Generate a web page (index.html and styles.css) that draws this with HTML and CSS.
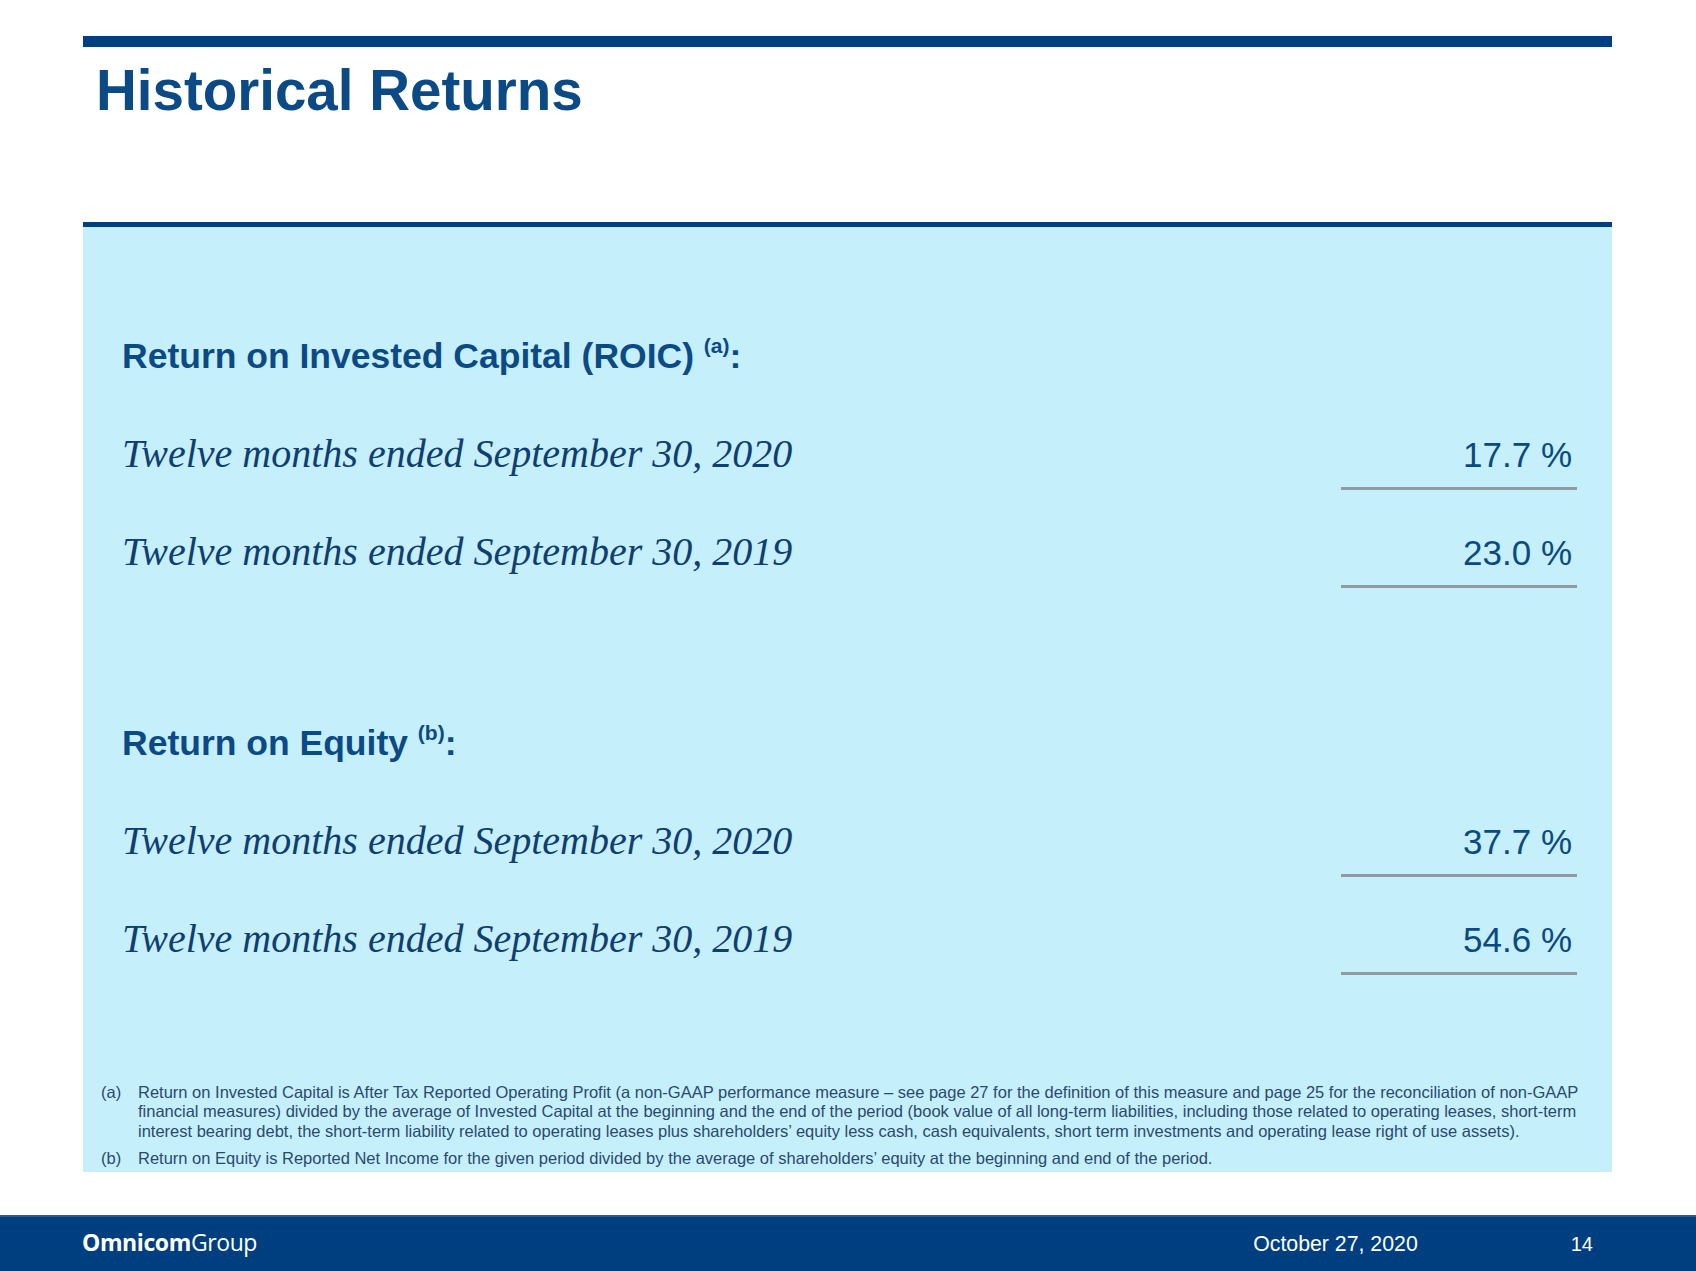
FILE: index.html
```html
<!DOCTYPE html>
<html lang="en">
<head>
<meta charset="utf-8">
<title>Historical Returns</title>
<link rel="stylesheet" href="styles.css">
</head>
<body>
<div class="slide">
  <header class="header">
    <div class="topbar"></div>
    <h1 class="title">Historical Returns</h1>
    <div class="divider"></div>
  </header>

  <main class="panel">
    <section class="block">
      <h2 class="block-title">Return on Invested Capital (ROIC) <sup>(a)</sup>:</h2>
      <div class="row">
        <span class="label">Twelve months ended September 30, 2020</span>
        <span class="value">17.7 %</span>
      </div>
      <div class="row">
        <span class="label">Twelve months ended September 30, 2019</span>
        <span class="value">23.0 %</span>
      </div>
    </section>

    <section class="block block-second">
      <h2 class="block-title">Return on Equity <sup>(b)</sup>:</h2>
      <div class="row">
        <span class="label">Twelve months ended September 30, 2020</span>
        <span class="value">37.7 %</span>
      </div>
      <div class="row">
        <span class="label">Twelve months ended September 30, 2019</span>
        <span class="value">54.6 %</span>
      </div>
    </section>

    <div class="notes">
      <div class="note">
        <span class="note-label">(a)</span>
        <p class="note-text">Return on Invested Capital is After Tax Reported Operating Profit (a non-GAAP performance measure – see page 27 for the definition of this measure and page 25 for the reconciliation of non-GAAP<br>financial measures) divided by the average of Invested Capital at the beginning and the end of the period (book value of all long-term liabilities, including those related to operating leases, short-term<br>interest bearing debt, the short-term liability related to operating leases plus shareholders’ equity less cash, cash equivalents, short term investments and operating lease right of use assets).</p>
      </div>
      <div class="note note-b">
        <span class="note-label">(b)</span>
        <p class="note-text">Return on Equity is Reported Net Income for the given period divided by the average of shareholders’ equity at the beginning and end of the period.</p>
      </div>
    </div>
  </main>

  <footer class="footer">
    <span class="logo"><span class="logo-bold">Omnicom</span>Group</span>
    <span class="date">October 27, 2020</span>
    <span class="page">14</span>
  </footer>
</div>
</body>
</html>
```

FILE: styles.css
```css
* {
  box-sizing: border-box;
}

html, body {
  margin: 0;
  padding: 0;
  background: #ffffff;
}

body {
  width: 1696px;
  height: 1271px;
  overflow: hidden;
  font-family: "Liberation Sans", Arial, sans-serif;
}

.slide {
  width: 1696px;
  height: 1271px;
  display: flex;
  flex-direction: column;
}

.header {
  padding-top: 36px;
  padding-left: 83px;
  padding-right: 84px;
}

.topbar {
  height: 11px;
  background: #003f80;
}

.title {
  margin: 12px 0 0 13px;
  height: 64px;
  font-size: 56.5px;
  line-height: 64px;
  font-weight: bold;
  color: #0b4a85;
}

.divider {
  margin-top: 99px;
  height: 5px;
  background: #003f80;
}

.panel {
  margin: 0 84px 0 83px;
  height: 945px;
  background: #c6effc;
  padding-top: 109px;
  display: flex;
  flex-direction: column;
}

.block {
  padding: 0 35px 0 39px;
}

.block-second {
  margin-top: 135px;
}

.block-title {
  margin: 0;
  font-size: 35.5px;
  line-height: 40px;
  font-weight: bold;
  color: #0b4a85;
}

.block-title sup {
  font-size: 21px;
  line-height: 0;
  vertical-align: 15px;
}

.row {
  display: flex;
  justify-content: space-between;
  align-items: baseline;
  margin-top: 39px;
}

.block-title + .row {
  margin-top: 55px;
}

.label {
  font-family: "Liberation Serif", "Times New Roman", serif;
  font-style: italic;
  font-size: 40px;
  line-height: 46px;
  color: #0f3e70;
}

.value {
  width: 236px;
  padding: 0 5px 9px 0;
  border-bottom: 3px solid #8f9aa3;
  text-align: right;
  font-size: 35px;
  line-height: 46px;
  color: #0b4a80;
}

.notes {
  margin-top: auto;
  padding: 0 20px 4px 18px;
}

.note {
  display: flex;
  font-size: 16.5px;
  line-height: 19.5px;
  color: #2a4a6c;
}

.note-b {
  margin-top: 7.5px;
}

.note-label {
  width: 37px;
  flex: none;
}

.note-text {
  margin: 0;
  white-space: nowrap;
}

.footer {
  margin-top: auto;
  height: 56px;
  background: #003f7f;
  border-top: 2px solid #2f5a8e;
  padding: 13px 103px 0 82px;
  display: flex;
  align-items: baseline;
  color: #ffffff;
}

.logo {
  flex: 1;
  font-family: "Open Sans", "Noto Sans", sans-serif;
  font-size: 23px;
  line-height: 24px;
  letter-spacing: -0.4px;
}

.logo-bold {
  font-weight: 700;
}

.date {
  margin-right: 153px;
  font-size: 21.3px;
  line-height: 24px;
}

.page {
  font-size: 20px;
  line-height: 24px;
}
```
